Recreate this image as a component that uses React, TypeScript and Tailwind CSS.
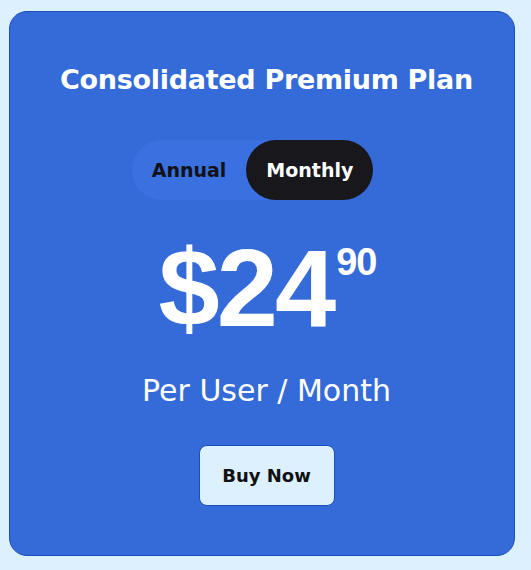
import React from "react";

export default function App() {
  return (
    <div className="min-h-[570px] w-[531px] bg-[#dcf0fe] pt-[11px] pl-[9px]" style={{ fontFamily: '"DejaVu Sans", sans-serif' }}>
      <div className="flex h-[545px] w-[506px] flex-col items-center rounded-[18px] border border-[#1a4fb8] bg-[#356ad9] pl-[9px]">
        <h1 className="mt-[50px] text-[27px] font-bold leading-[36px] tracking-[-0.3px] text-white">Consolidated Premium Plan</h1>
        <div className="mt-[42px] mr-[28px] flex h-[60px] items-center rounded-full bg-[#3a70e0] pl-[20px]">
          <span className="mr-[20px] text-[19px] font-bold text-[#111116]">Annual</span>
          <span className="flex h-[60px] items-center rounded-full bg-[#18171c] px-[20px] text-[19px] font-bold text-white">Monthly</span>
        </div>
        <div className="mt-[33px] ml-[2px] flex items-start text-white" style={{ fontFamily: '"Liberation Sans", Arial, sans-serif' }}>
          <span className="text-[110px] font-bold leading-[110px] tracking-[-3px]">$24</span>
          <span className="mt-[9px] ml-[3px] text-[38px] font-bold leading-[40px] tracking-[-1px]">90</span>
        </div>
        <p className="mt-[30px] text-[30px] leading-[36px] text-white">Per User / Month</p>
        <button className="mt-[36px] h-[61px] w-[136px] rounded-[8px] border border-[#1a4fb8] bg-[#dcf0fe] text-[18px] font-bold text-[#111]">Buy Now</button>
      </div>
    </div>
  );
}
